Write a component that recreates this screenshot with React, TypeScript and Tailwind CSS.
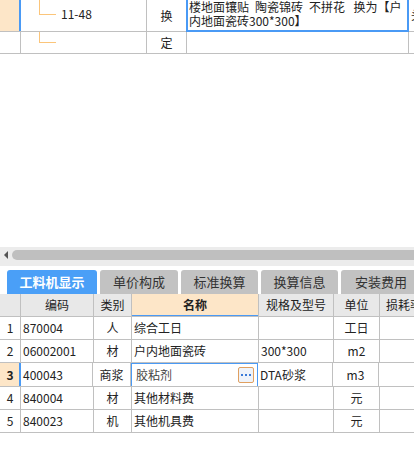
import React from "react";

const G = "border-[#c0c0c0]";

function TopTable() {
  return (
    <div className="relative h-[54px] w-[414px] overflow-hidden bg-white">
      {/* row 1 */}
      <div className={`flex h-[32px] border-b ${G}`}>
        <div className="w-[19px] bg-[#fde6c8]" />
        <div className="w-[2px] bg-[#4a9af5]" />
        <div className={`relative w-[126px] border-r ${G}`}>
          <div className="absolute left-[18px] top-0 h-[15px] w-px bg-[#fbc57a]" />
          <div className="absolute left-[19px] top-[14px] h-px w-[16px] bg-[#fbc57a]" />
          <span className="absolute left-[40px] top-[7px] text-[12px] leading-[14px] text-[#222]">11-48</span>
        </div>
        <div className={`flex w-[40px] items-center justify-center border-r ${G} text-[12px] text-[#222]`}>换</div>
        <div className="-mb-px -ml-px -mt-px flex w-[223px] flex-col overflow-hidden border-2 border-t-0 border-[#4a9af5] pl-[1px] text-[12px] leading-[14px] text-[#222]">
          <span className="mt-[1px] whitespace-pre">{"楼地面镶贴\u2002陶瓷锦砖\u2002不拼花\u2002\u2009换为【户"}</span>
          <span className="whitespace-pre">内地面瓷砖300*300】</span>
        </div>
        <div className="w-[5px] overflow-hidden pl-[2px] pt-[8px] text-[12px] leading-[14px] text-[#222]">头</div>
      </div>
      {/* row 2 */}
      <div className={`flex h-[22px] border-b ${G}`}>
        <div className={`w-[21px] border-r ${G}`} />
        <div className={`relative w-[126px] border-r ${G}`}>
          <div className="absolute left-[18px] top-0 h-[11px] w-px bg-[#fbc57a]" />
          <div className="absolute left-[19px] top-[10px] h-px w-[16px] bg-[#fbc57a]" />
        </div>
        <div className={`flex w-[40px] items-center justify-center border-r ${G} text-[12px] text-[#222]`}>定</div>
        <div className={`w-[222px] border-r ${G}`} />
      </div>
    </div>
  );
}

function Scrollbar() {
  return (
    <div className="flex h-[19px] w-[414px] items-start bg-[#ececec] pt-[3px]">
      <div className="flex h-[10px] w-[12px] items-center justify-center">
        <div className="h-0 w-0 border-y-[4px] border-r-[4px] border-y-transparent border-r-[#555]" />
      </div>
      <div className="h-[10px] flex-1 rounded-l-[5px] bg-[#bfbfbf]" />
    </div>
  );
}

function Tabs() {
  const tabs = [
    { t: "单价构成", w: "w-[78px]" },
    { t: "标准换算", w: "w-[77px]" },
    { t: "换算信息", w: "w-[77px]" },
    { t: "安装费用", w: "w-[80px]" },
  ];
  return (
    <div className="flex h-[25px] w-[414px] items-end gap-[3px] overflow-hidden bg-white pl-[7px]">
      <div className="flex h-[24px] w-[90px] shrink-0 items-center justify-center rounded-t-[3px] bg-[#4a9ff7] text-[13px] font-bold text-white">
        工料机显示
      </div>
      {tabs.map((x) => (
        <div
          key={x.t}
          className={`flex h-[24px] ${x.w} shrink-0 items-center justify-center rounded-t-[3px] bg-[#c2c2c2] text-[13px] text-[#333]`}
        >
          {x.t}
        </div>
      ))}
    </div>
  );
}

const W = ["w-[21px]", "w-[73px]", "w-[38px]", "w-[127px]", "w-[75px]", "w-[46px]", "w-[40px]"];

function Header() {
  const cols = ["", "编码", "类别", "名称", "规格及型号", "单位", "损耗率"];
  return (
    <div className={`flex h-[23px] w-[414px] overflow-hidden border-b ${G} bg-[#e8e8e8]`}>
      {cols.map((c, i) => (
        <div
          key={i}
          className={`flex shrink-0 items-center justify-center whitespace-nowrap border-r ${G} ${W[i]} text-[12px] text-[#222] ${
            i === 3 ? "relative bg-[#fde6c8] font-bold" : ""
          } ${i === 6 ? "justify-start pl-[6px]" : ""}`}
        >
          {c}
          {i === 3 && <div className="absolute -bottom-px left-0 right-0 h-[2px] bg-[#4a9af5]" />}
        </div>
      ))}
    </div>
  );
}

type Row = { n: string; code: string; type: string; name: string; spec: string; unit: string };
const rows: Row[] = [
  { n: "1", code: "870004", type: "人", name: "综合工日", spec: "", unit: "工日" },
  { n: "2", code: "06002001", type: "材", name: "户内地面瓷砖", spec: "300*300", unit: "m2" },
  { n: "3", code: "400043", type: "商浆", name: "胶粘剂", spec: "DTA砂浆", unit: "m3" },
  { n: "4", code: "840004", type: "材", name: "其他材料费", spec: "", unit: "元" },
  { n: "5", code: "840023", type: "机", name: "其他机具费", spec: "", unit: "元" },
];

function DataRow({ r }: { r: Row }) {
  const sel = r.n === "3";
  const h = sel ? "h-[24px]" : "h-[23px]";
  return (
    <div className={`flex ${h} w-[414px] overflow-hidden border-b ${G} text-[12px] text-[#222]`}>
      <div
        className={`flex shrink-0 items-center justify-center ${W[0]} ${
          sel ? "border-r-2 border-[#4a9af5] bg-[#fde6c8] pl-[1px] font-bold" : `border-r ${G}`
        }`}
      >
        {r.n}
      </div>
      <div className={`flex shrink-0 items-center border-r ${G} ${sel ? "w-[72px]" : W[1]} pl-[2px]`}>{r.code}</div>
      <div className={`flex shrink-0 items-center justify-center border-r ${G} ${W[2]}`}>{r.type}</div>
      {sel ? (
        <div className="relative -mb-px flex w-[127px] shrink-0 items-center border border-[#4a9af5] pl-[4px] text-[#444]">
          {r.name}
          <div className="absolute right-[3px] top-[3px] flex h-[16px] w-[16px] items-center justify-center gap-[2px] rounded-[2px] border border-[#e0a060] bg-[#eef3fa]">
            <span className="h-[2px] w-[2px] bg-[#3a7ad8]" />
            <span className="h-[2px] w-[2px] bg-[#3a7ad8]" />
            <span className="h-[2px] w-[2px] bg-[#3a7ad8]" />
          </div>
        </div>
      ) : (
        <div className={`flex shrink-0 items-center border-r ${G} ${W[3]} pl-[2px]`}>{r.name}</div>
      )}
      <div className={`flex shrink-0 items-center border-r ${G} ${W[4]} pl-[2px]`}>{r.spec}</div>
      <div className={`flex shrink-0 items-center justify-center border-r ${G} ${W[5]}`}>{r.unit}</div>
      <div className={`flex shrink-0 items-center border-r ${G} ${W[6]}`} />
    </div>
  );
}

export default function App() {
  return (
    <div className="h-[460px] w-[414px] overflow-hidden bg-white font-['Noto_Sans_CJK_SC',sans-serif]">
      <TopTable />
      <div className="h-[193px]" />
      <Scrollbar />
      <div className="h-[3px]" />
      <Tabs />
      <Header />
      {rows.map((r) => (
        <DataRow key={r.n} r={r} />
      ))}
    </div>
  );
}
